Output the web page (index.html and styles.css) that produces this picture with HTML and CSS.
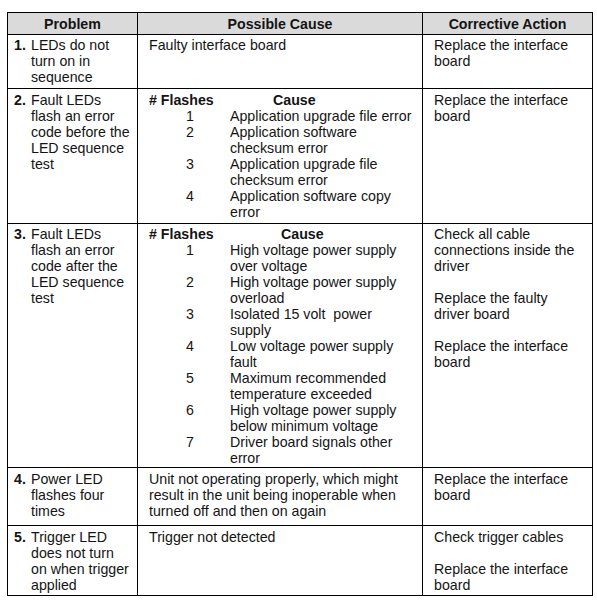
FILE: index.html
```html
<!DOCTYPE html>
<html>
<head>
<meta charset="utf-8">
<link rel="stylesheet" href="styles.css">
</head>
<body>
<table class="trouble">
  <colgroup>
    <col class="c-prob">
    <col class="c-cause">
    <col class="c-action">
  </colgroup>
  <thead>
    <tr class="head">
      <th>Problem</th>
      <th>Possible Cause</th>
      <th>Corrective Action</th>
    </tr>
  </thead>
  <tbody>
    <tr class="r1">
      <td class="prob"><div class="item"><span class="num">1.</span><span>LEDs do not<br>turn on in<br>sequence</span></div></td>
      <td class="cause">Faulty interface board</td>
      <td class="action">Replace the interface<br>board</td>
    </tr>
    <tr class="r2">
      <td class="prob"><div class="item"><span class="num">2.</span><span>Fault LEDs<br>flash an error<br>code before the<br>LED sequence<br>test</span></div></td>
      <td class="cause">
        <div class="flash">
          <div class="fh">#&nbsp;Flashes</div><div class="ch ch2">Cause</div>
          <div class="fn">1</div><div>Application upgrade file error</div>
          <div class="fn">2</div><div>Application software<br>checksum error</div>
          <div class="fn">3</div><div>Application upgrade file<br>checksum error</div>
          <div class="fn">4</div><div>Application software copy<br>error</div>
        </div>
      </td>
      <td class="action">Replace the interface<br>board</td>
    </tr>
    <tr class="r3">
      <td class="prob"><div class="item"><span class="num">3.</span><span>Fault LEDs<br>flash an error<br>code after the<br>LED sequence<br>test</span></div></td>
      <td class="cause">
        <div class="flash">
          <div class="fh">#&nbsp;Flashes</div><div class="ch ch3">Cause</div>
          <div class="fn">1</div><div>High voltage power supply<br>over voltage</div>
          <div class="fn">2</div><div>High voltage power supply<br>overload</div>
          <div class="fn">3</div><div>Isolated 15 volt&nbsp; power<br>supply</div>
          <div class="fn">4</div><div>Low voltage power supply<br>fault</div>
          <div class="fn">5</div><div>Maximum recommended<br>temperature exceeded</div>
          <div class="fn">6</div><div>High voltage power supply<br>below minimum voltage</div>
          <div class="fn">7</div><div>Driver board signals other<br>error</div>
        </div>
      </td>
      <td class="action">
        <p>Check all cable<br>connections inside the<br>driver</p>
        <p>Replace the faulty<br>driver board</p>
        <p>Replace the interface<br>board</p>
      </td>
    </tr>
    <tr class="r4">
      <td class="prob"><div class="item"><span class="num">4.</span><span>Power LED<br>flashes four<br>times</span></div></td>
      <td class="cause">Unit not operating properly, which might<br>result in the unit being inoperable when<br>turned off and then on again</td>
      <td class="action">Replace the interface<br>board</td>
    </tr>
    <tr class="r5">
      <td class="prob"><div class="item"><span class="num">5.</span><span>Trigger LED<br>does not turn<br>on when trigger<br>applied</span></div></td>
      <td class="cause">Trigger not detected</td>
      <td class="action">
        <p>Check trigger cables</p>
        <p>Replace the interface<br>board</p>
      </td>
    </tr>
  </tbody>
</table>
</body>
</html>
```

FILE: styles.css
```css
html, body {
  margin: 0;
  padding: 0;
  background: #fff;
}

body {
  font-family: "Liberation Sans", Arial, sans-serif;
  font-size: 14.2px;
  line-height: 16px;
  color: #141414;
}

.trouble {
  border-collapse: collapse;
  margin: 12px 0 0 7px;
  table-layout: fixed;
  width: 585px;
}

.c-prob { width: 130px; }
.c-cause { width: 285px; }
.c-action { width: 170px; }

.trouble th,
.trouble td {
  border: 1px solid #000;
  padding: 0;
}

.head th {
  background: #dadada;
  font-weight: bold;
  text-align: center;
  height: 21px;
  vertical-align: middle;
}

.trouble td {
  vertical-align: top;
  padding-top: 3px;
}

.r1 td { height: 51px; padding-top: 2px; }
.r2 td { height: 131px; }
.r3 td { height: 241px; padding-top: 2px; }
.r4 td { height: 54px; }
.r5 td { height: 66px; }

td.prob { padding-left: 6px; }
td.cause { padding-left: 11px; }
td.action { padding-left: 11px; }

.item {
  display: flex;
}

.num {
  flex: none;
  width: 17px;
  font-weight: bold;
}

.flash {
  display: grid;
  grid-template-columns: 81px 1fr;
}

.fh,
.ch {
  font-weight: bold;
}

.ch2 { padding-left: 43px; }
.ch3 { padding-left: 51px; }

.fn {
  padding-left: 37px;
}

.action p {
  margin: 0 0 16px;
}

.action p:last-child {
  margin-bottom: 0;
}
```
